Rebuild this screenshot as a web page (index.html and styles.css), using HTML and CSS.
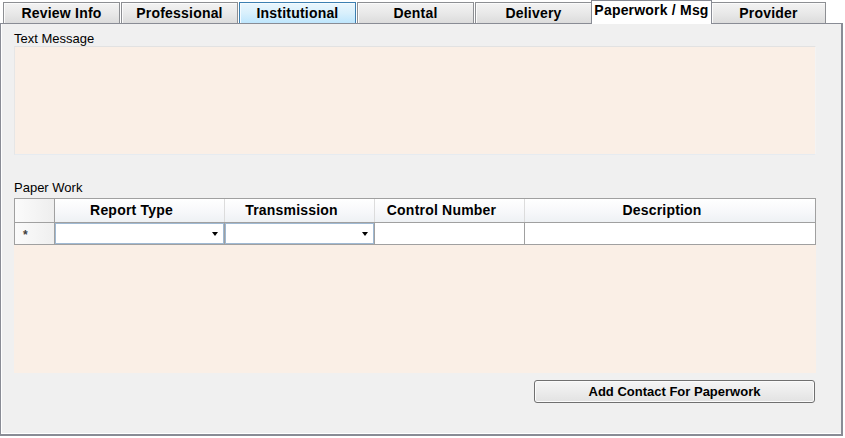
FILE: index.html
```html
<!DOCTYPE html>
<html>
<head>
<meta charset="utf-8">
<link rel="stylesheet" href="styles.css">
</head>
<body>
<div class="tabs">
  <div class="tab">Review Info</div>
  <div class="tab">Professional</div>
  <div class="tab tab-hover">Institutional</div>
  <div class="tab">Dental</div>
  <div class="tab">Delivery</div>
  <div class="tab tab-active">Paperwork / Msg</div>
  <div class="tab tab-last">Provider</div>
</div>
<div class="panel">
  <div class="label">Text Message</div>
  <div class="textbox"></div>
  <div class="label label-pw">Paper Work</div>
  <div class="grid">
    <div class="grid-table">
      <div class="grid-head">
        <div class="hcell c-rh"></div>
        <div class="hcell c-rt">Report Type</div>
        <div class="hcell c-tr">Transmission</div>
        <div class="hcell c-cn">Control Number</div>
        <div class="hcell c-ds">Description</div>
      </div>
      <div class="grid-row">
        <div class="rcell c-rh rowhead"><span class="star">*</span></div>
        <div class="rcell c-rt"><div class="combo"><span class="arrow"></span></div></div>
        <div class="rcell c-tr"><div class="combo"><span class="arrow"></span></div></div>
        <div class="rcell c-cn"></div>
        <div class="rcell c-ds"></div>
      </div>
    </div>
    <div class="grid-fill"></div>
  </div>
  <div class="actions">
    <button class="btn">Add Contact For Paperwork</button>
  </div>
</div>
</body>
</html>
```

FILE: styles.css
```css
html, body {
  margin: 0;
  padding: 0;
  background: #ffffff;
  font-family: "Liberation Sans", Arial, sans-serif;
  color: #000;
}

.tabs {
  display: flex;
  align-items: flex-end;
  height: 23px;
  padding-left: 3px;
}

.tab {
  box-sizing: border-box;
  width: 117px;
  height: 21px;
  margin-right: 1px;
  border: 1px solid #8d8f93;
  border-bottom: none;
  background: linear-gradient(#f3f3f3, #e9e9e9 50%, #dcdcdc);
  box-shadow: inset 1px 1px 0 #fbfbfb;
  font-size: 14px;
  font-weight: bold;
  letter-spacing: 0.2px;
  line-height: 20px;
  text-align: center;
  white-space: nowrap;
}

.tab-hover {
  border-color: #3c7fb1;
  background: linear-gradient(#eaf6fd, #d9f0fc 50%, #bee6fd);
  box-shadow: inset 1px 1px 0 #f4fbff;
}

.tab-active {
  position: relative;
  z-index: 1;
  width: 121px;
  height: 24px;
  margin-left: -2px;
  margin-right: 0;
  margin-bottom: -1px;
  background: #ffffff;
  box-shadow: none;
  border-color: #898c95;
  line-height: 18px;
}

.tab-last {
  width: 115px;
  margin-left: -1px;
}

.panel {
  box-sizing: border-box;
  width: 843px;
  height: 413px;
  border: 1px solid #898c95;
  border-bottom-width: 2px;
  border-right-width: 2px;
  background: #f0f0f0;
  box-shadow: inset 1px 0 0 #ffffff, inset 0 -1px 0 #ffffff;
  padding: 7px 25px 0 13px;
}

.label {
  font-size: 13px;
  line-height: 15px;
  height: 15px;
}

.textbox {
  box-sizing: border-box;
  height: 109px;
  width: 802px;
  background: #faefe6;
  border: 1px solid;
  border-color: #e2e2e2 #f3f3f3 #e6ebf0 #e6e6e6;
}

.label-pw {
  margin-top: 25px;
  margin-bottom: 3px;
}

.grid {
  width: 802px;
  height: 175px;
  background: #faefe6;
  display: flex;
  flex-direction: column;
}

.grid-table {
  box-sizing: border-box;
  border: 1px solid #a0a0a0;
  border-bottom: none;
}

.grid-head {
  display: flex;
  height: 24px;
  border-bottom: 1px solid #a0a0a0;
  box-sizing: border-box;
}

.hcell {
  box-sizing: border-box;
  height: 23px;
  border-right: 1px solid #dcdcdc;
  background: linear-gradient(#ffffff, #f7f8fa 55%, #eef1f4);
  font-size: 14px;
  font-weight: bold;
  letter-spacing: 0.2px;
  line-height: 23px;
  text-align: center;
  padding-right: 16px;
  white-space: nowrap;
}

.hcell.c-rh {
  border-right: 1px solid #a0a0a0;
  background: linear-gradient(90deg, #fbfbfb, #eeeeee);
}

.hcell.c-ds {
  border-right: none;
}

.c-rh { width: 40px; }
.c-rt { width: 170px; }
.c-tr { width: 150px; }
.c-cn { width: 150px; }
.c-ds { width: 290px; }

.grid-row {
  display: flex;
  height: 22px;
  border-bottom: 1px solid #a0a0a0;
  box-sizing: border-box;
}

.rcell {
  box-sizing: border-box;
  height: 21px;
  border-right: 1px solid #a0a0a0;
  background: #ffffff;
}

.rcell.c-ds {
  border-right: none;
}

.rowhead {
  background: linear-gradient(90deg, #fbfbfb, #efefef);
  position: relative;
}

.star {
  position: absolute;
  left: 8px;
  top: 6px;
  font-size: 12px;
  font-weight: bold;
  line-height: 12px;
  color: #404040;
}

.combo {
  box-sizing: border-box;
  height: 21px;
  border: 1px solid #9fb9d3;
  background: #ffffff;
  display: flex;
  justify-content: flex-end;
  align-items: center;
  padding-right: 5px;
}

.arrow {
  width: 0;
  height: 0;
  border-left: 3.5px solid transparent;
  border-right: 3.5px solid transparent;
  border-top: 4px solid #000;
  margin-top: 1px;
}

.grid-fill {
  flex: 1;
  background: #faefe6;
}

.actions {
  display: flex;
  justify-content: flex-end;
  width: 802px;
  margin-top: 7px;
}

.btn {
  box-sizing: border-box;
  width: 281px;
  height: 23px;
  margin-right: 1px;
  border: 1px solid #707070;
  border-radius: 3px;
  background: linear-gradient(#f5f5f5, #ececec 50%, #e2e2e2);
  box-shadow: inset 0 0 0 1px #fbfbfb;
  font-family: "Liberation Sans", Arial, sans-serif;
  font-size: 13px;
  font-weight: bold;
  color: #000;
  padding: 0;
  line-height: 20px;
}
```
